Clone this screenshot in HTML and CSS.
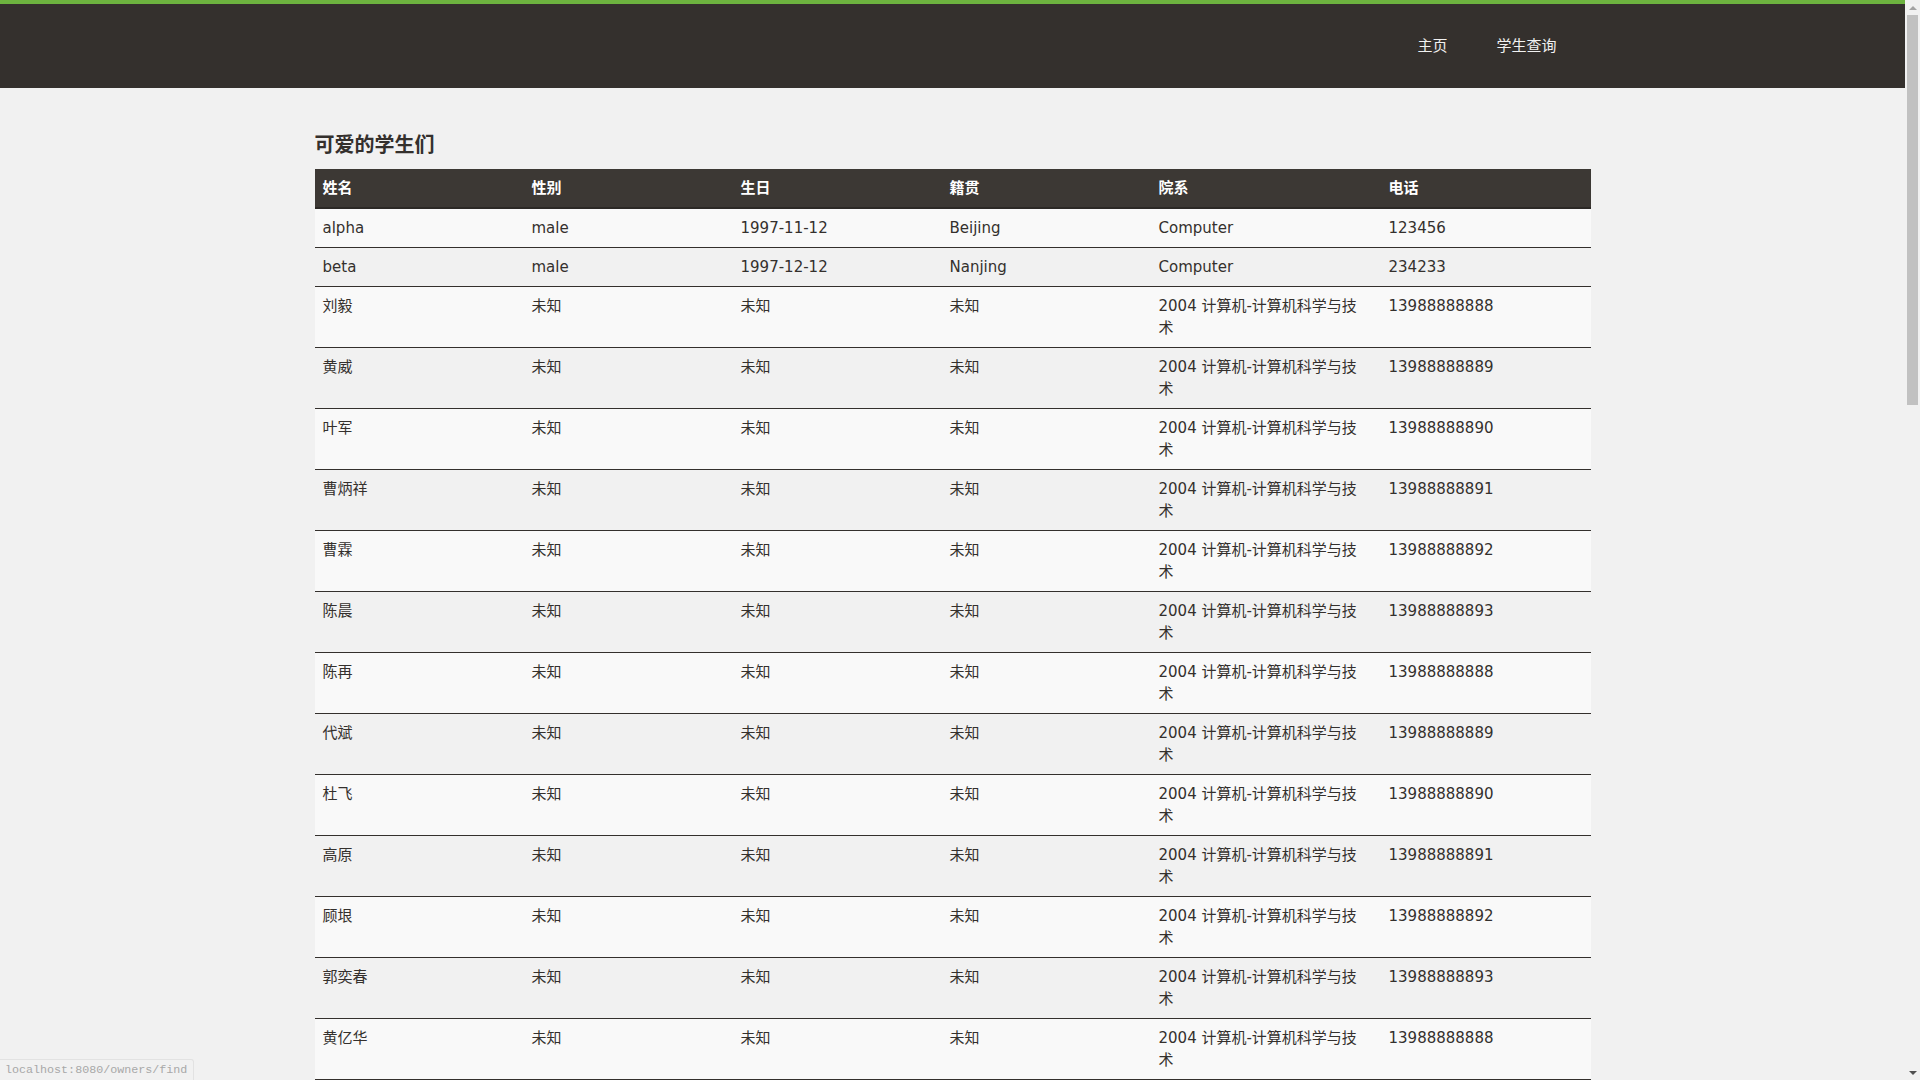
FILE: index.html
```html
<!DOCTYPE html>
<html lang="zh-CN">
<head>
<meta charset="utf-8">
<title>学生查询</title>
<link rel="stylesheet" href="styles.css">
</head>
<body>
<div class="page">
<header class="topbar">
  <div class="topbar-inner">
    <nav class="nav">
      <a class="nav-link" href="#">主页</a>
      <a class="nav-link" href="#">学生查询</a>
    </nav>
  </div>
</header>
<main class="container">
  <h2 class="title">可爱的学生们</h2>
  <table class="students">
    <colgroup>
      <col class="c-name"><col class="c-sex"><col class="c-birth"><col class="c-place"><col class="c-dept"><col class="c-phone">
    </colgroup>
    <thead>
      <tr><th>姓名</th><th>性别</th><th>生日</th><th>籍贯</th><th>院系</th><th>电话</th></tr>
    </thead>
    <tbody>
      <tr><td>alpha</td><td>male</td><td>1997-11-12</td><td>Beijing</td><td class="dept">Computer</td><td>123456</td></tr>
      <tr><td>beta</td><td>male</td><td>1997-12-12</td><td>Nanjing</td><td class="dept">Computer</td><td>234233</td></tr>
      <tr><td>刘毅</td><td>未知</td><td>未知</td><td>未知</td><td class="dept">2004 计算机-计算机科学与技术</td><td>13988888888</td></tr>
      <tr><td>黄威</td><td>未知</td><td>未知</td><td>未知</td><td class="dept">2004 计算机-计算机科学与技术</td><td>13988888889</td></tr>
      <tr><td>叶军</td><td>未知</td><td>未知</td><td>未知</td><td class="dept">2004 计算机-计算机科学与技术</td><td>13988888890</td></tr>
      <tr><td>曹炳祥</td><td>未知</td><td>未知</td><td>未知</td><td class="dept">2004 计算机-计算机科学与技术</td><td>13988888891</td></tr>
      <tr><td>曹霖</td><td>未知</td><td>未知</td><td>未知</td><td class="dept">2004 计算机-计算机科学与技术</td><td>13988888892</td></tr>
      <tr><td>陈晨</td><td>未知</td><td>未知</td><td>未知</td><td class="dept">2004 计算机-计算机科学与技术</td><td>13988888893</td></tr>
      <tr><td>陈再</td><td>未知</td><td>未知</td><td>未知</td><td class="dept">2004 计算机-计算机科学与技术</td><td>13988888888</td></tr>
      <tr><td>代斌</td><td>未知</td><td>未知</td><td>未知</td><td class="dept">2004 计算机-计算机科学与技术</td><td>13988888889</td></tr>
      <tr><td>杜飞</td><td>未知</td><td>未知</td><td>未知</td><td class="dept">2004 计算机-计算机科学与技术</td><td>13988888890</td></tr>
      <tr><td>高原</td><td>未知</td><td>未知</td><td>未知</td><td class="dept">2004 计算机-计算机科学与技术</td><td>13988888891</td></tr>
      <tr><td>顾垠</td><td>未知</td><td>未知</td><td>未知</td><td class="dept">2004 计算机-计算机科学与技术</td><td>13988888892</td></tr>
      <tr><td>郭奕春</td><td>未知</td><td>未知</td><td>未知</td><td class="dept">2004 计算机-计算机科学与技术</td><td>13988888893</td></tr>
      <tr><td>黄亿华</td><td>未知</td><td>未知</td><td>未知</td><td class="dept">2004 计算机-计算机科学与技术</td><td>13988888888</td></tr>
    </tbody>
  </table>
</main>
</div>
<div class="scrollbar" aria-hidden="true">
  <div class="sb-btn"><span class="sb-arrow-up"></span></div>
  <div class="sb-thumb"></div>
  <div class="sb-btn sb-btn-down"><span class="sb-arrow-down"></span></div>
</div>
<div class="status-bubble">localhost:8080/owners/find</div>
</body>
</html>
```
FILE: styles.css
```css
html, body {
  margin: 0;
  padding: 0;
}

body {
  background: #f1f1f1;
  color: #34302d;
  font-family: "DejaVu Sans", "Noto Sans CJK SC", sans-serif;
  font-size: 15px;
  line-height: 22px;
}

.page {
  margin-right: 15px;
}

.topbar {
  background: #34302d;
  border-top: 4px solid #6db33f;
  height: 84px;
}

.topbar-inner {
  width: 1276px;
  margin: 0 auto;
  height: 100%;
  display: flex;
  justify-content: flex-end;
  align-items: center;
}

.nav {
  display: flex;
  gap: 49px;
  padding-right: 34px;
}

.nav-link {
  color: #f1f1f1;
  text-decoration: none;
  font-size: 15px;
  line-height: 22px;
}

.container {
  width: 1276px;
  margin: 0 auto;
  padding: 46px 0 0;
}

.title {
  margin: 0 0 13px;
  font-size: 20px;
  line-height: 22px;
  font-weight: bold;
  color: #34302d;
}

.students {
  width: 1276px;
  border-collapse: collapse;
  table-layout: fixed;
}

.c-name, .c-sex, .c-birth, .c-place { width: 209px; }
.c-dept { width: 230px; }
.c-phone { width: 210px; }

.students th {
  background: #3c3834;
  color: #ffffff;
  font-weight: bold;
  text-align: left;
  padding: 8px;
  border-bottom: 2px solid #2c2926;
}

.students td {
  padding: 8px;
  vertical-align: top;
  border-bottom: 1px solid #34302d;
}

.students td.dept {
  padding-right: 20px;
}

.students tbody tr:nth-child(odd) td {
  background: #f9f9f9;
}

.students tbody tr:nth-child(even) td {
  background: #f1f1f1;
}

.scrollbar {
  position: fixed;
  top: 0;
  right: 0;
  width: 15px;
  height: 100vh;
  background: #f1f1f1;
  display: flex;
  flex-direction: column;
}

.sb-btn {
  height: 15px;
  display: flex;
  align-items: center;
  justify-content: center;
  flex: none;
}

.sb-btn-down {
  margin-top: auto;
}

.sb-arrow-up {
  width: 0;
  height: 0;
  border-left: 4px solid transparent;
  border-right: 4px solid transparent;
  border-bottom: 4px solid #a3a3a3;
}

.sb-arrow-down {
  width: 0;
  height: 0;
  border-left: 4px solid transparent;
  border-right: 4px solid transparent;
  border-top: 4px solid #505050;
}

.sb-thumb {
  margin: 0 2px;
  height: 390px;
  background: #c1c1c1;
  flex: none;
}

.status-bubble {
  position: fixed;
  left: 0;
  bottom: 0;
  padding: 1px 6px 0 5px;
  height: 19px;
  line-height: 19px;
  font-family: "Liberation Mono", monospace;
  font-size: 11.7px;
  color: #a8a8a8;
  background: #f1f1f1;
  border-top: 1px solid #e2e2e2;
  border-right: 1px solid #e2e2e2;
  border-top-right-radius: 3px;
}
```
